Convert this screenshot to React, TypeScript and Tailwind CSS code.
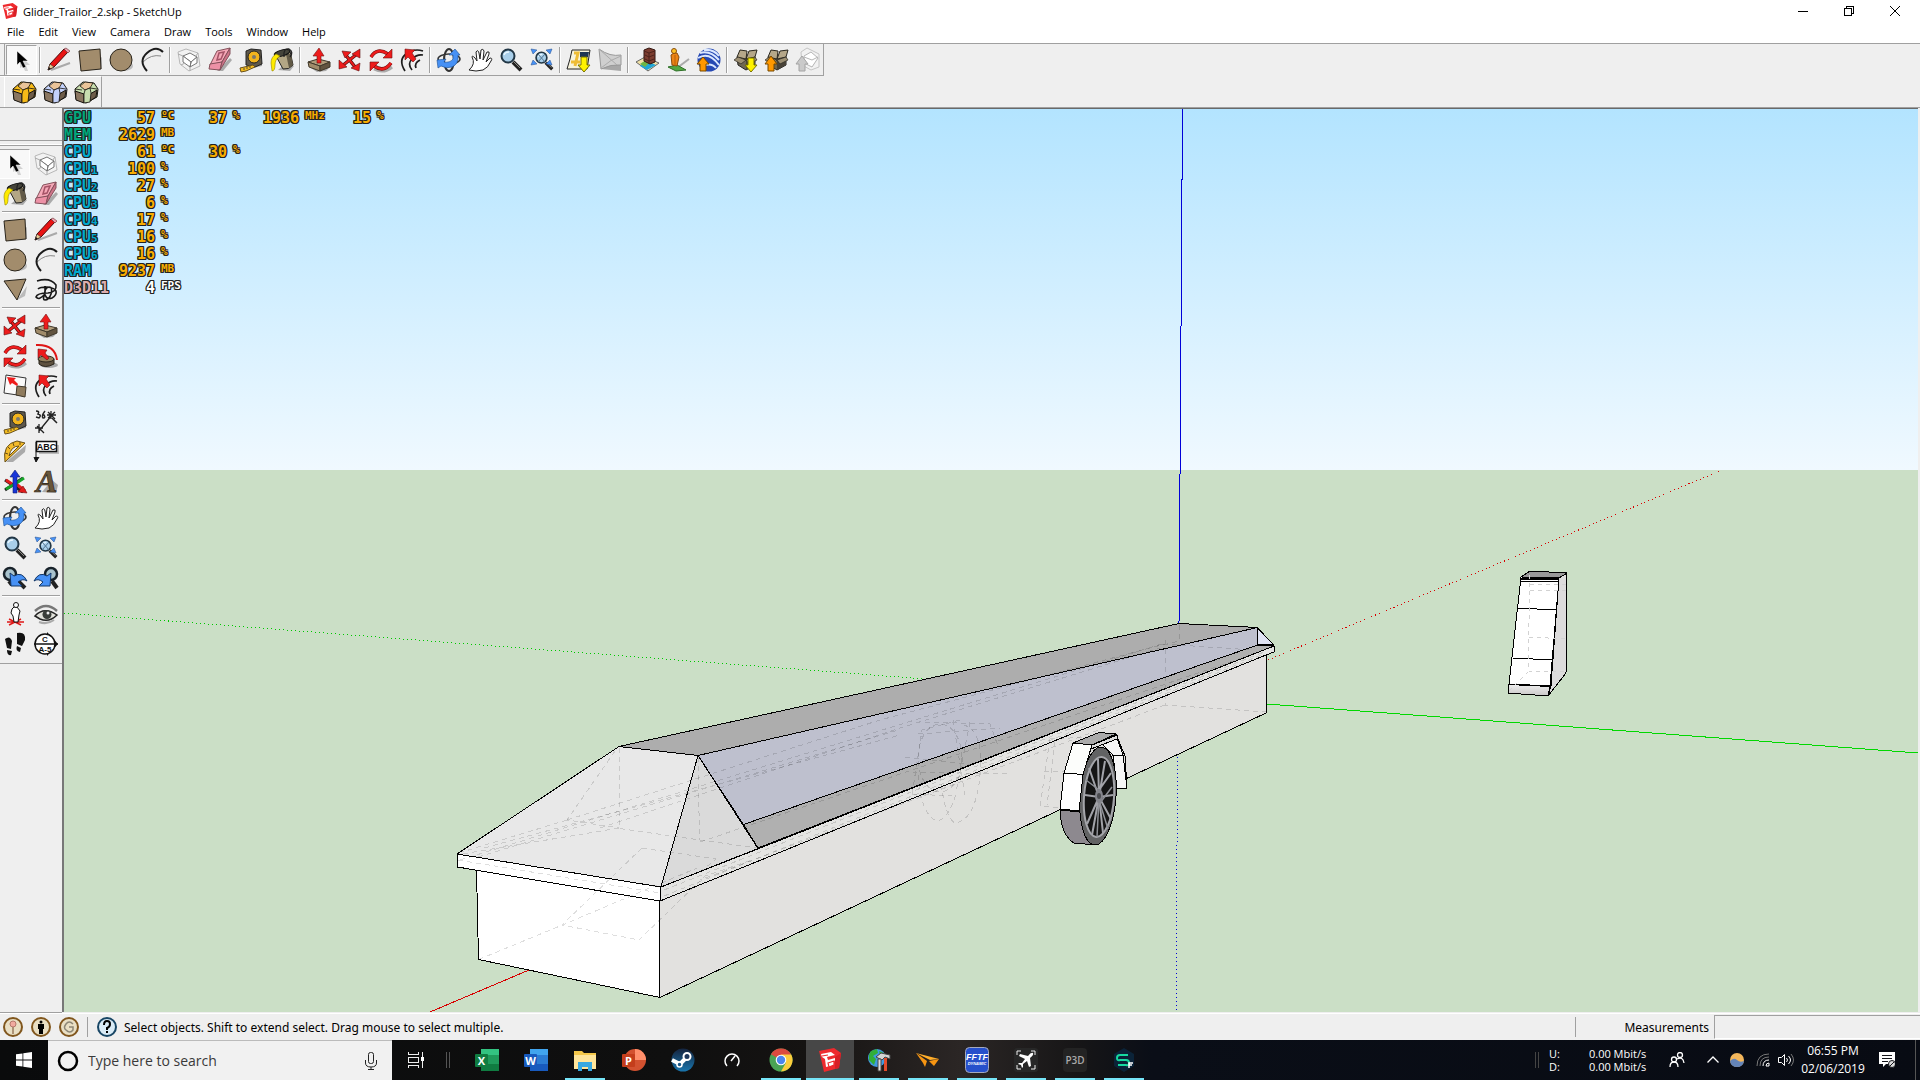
import type { ReactNode } from "react";

type IconName = keyof typeof icons;

const lens = (
    <>
        <path d="M14 14l8 8" stroke="#222" strokeWidth="4" />
        <path d="M15 14l6 6" stroke="#8b8b85" strokeWidth="1" />
        <circle cx="9" cy="8" r="6.5" fill="#a9cfea" stroke="#223746" strokeWidth="2" />
        <path d="M5 7q1-3 5-3" stroke="#e8f6ff" strokeWidth="1.5" fill="none" />
    </>
);

const moveArrows = (
    <>
        <path d="M7 6l10 13M19 6L4 18" stroke="#5b1010" strokeWidth="3.5" />
        <path d="M7 6l10 13M19 6L4 18" stroke="#ee1c1c" strokeWidth="2" />
        <path
            d="M4 3l9 1-6 6zM22 1v9l-8-4zM1 12v9l8-2zM22 15l-1 8-8-3z"
            fill="#ee1c1c"
            stroke="#5b1010"
            strokeWidth=".6"
        />
    </>
);

const boxShape = (
    <>
        <path d="M3 9l9 3 9-3v8l-9 5-8-5z" fill="#6f6753" stroke="#222" />
        <path d="M12 12l9-3v8l-9 5z" fill="#494338" />
        <path d="M3 9l3-7 7 1-1 8zM12 11l3-8 8-1-2 7z" fill="#b5a789" stroke="#2b281f" />
        <path d="M4 9l-4 3 7 4 5-4zM21 9l2 3-8 4-3-4z" fill="#9c8f73" stroke="#2b281f" strokeWidth=".7" />
    </>
);

function solid(color: string, top: string) {
    return (
        <>
            <path d="M1 9l8-7 11 1 4 6-1 8-11 6-10-4z" fill={color} stroke="#15130e" />
            <path d="M6 6l5-4 8 1-3 5-5 2z" fill={top} stroke="#15130e" strokeWidth=".8" />
            <path d="M1 11l9 3v9l-8-3z" fill="#8a7660" stroke="#15130e" />
            <path d="M16 14l7-4-1 7-6 4z" fill="#6d5c49" stroke="#15130e" />
            <path d="M10 14l1-4 5-2 1 5-1 9-6 1z" fill={color} stroke="#15130e" strokeWidth=".8" />
            <path d="M1 9l7 1M16 8l7 1" stroke="#15130e" strokeWidth=".8" />
        </>
    );
}

const icons = {
    select: (
        <>
            <path d="M10 7v13l3-2 2 5h3l-2-6h4z" fill="#999" opacity=".4" />
            <path d="M7 3v14l3-3 3 6 3-1-3-6h5z" fill="#000" stroke="#fff" strokeWidth=".5" />
        </>
    ),
    pencil: (
        <>
            <path d="M4 22l19-7" stroke="#aaa" strokeWidth="2" />
            <path d="M1 22l2-6L17 1l4 3L7 19z" fill="#e81313" stroke="#4d0909" />
            <path d="M1 22l2-6 4 3z" fill="#e9cc94" stroke="#333" strokeWidth=".6" />
            <path d="M1 22l1-3 2 2z" fill="#111" />
            <path d="M17 1l2-1 4 3-2 2z" fill="#ef9dac" stroke="#633" strokeWidth=".6" />
        </>
    ),
    rect: (
        <>
            <path d="M4 23l20-2V9z" fill="#bbb" />
            <path d="M1 3l21-2 1 20-20 2z" fill="#a28c6c" stroke="#29241b" />
        </>
    ),
    circle: (
        <>
            <ellipse cx="15" cy="18" rx="9" ry="5" fill="#bbb" />
            <circle cx="12" cy="12" r="11" fill="#a28c6c" stroke="#29241b" />
        </>
    ),
    polygon: (
        <>
            <path d="M14 22L24 8l-2 10z" fill="#bbb" />
            <path d="M1 3l22-2-9 21z" fill="#a28c6c" stroke="#29241b" />
        </>
    ),
    arc: (
        <>
            <path d="M3 14q8-8 18-6" fill="none" stroke="#888" />
            <path d="M7 23Q-2 13 7 5t16-1" fill="none" stroke="#1b1b1b" strokeWidth="2" />
        </>
    ),
    freehand: (
        <path
            d="M3 3q13-4 19 4 1 7-8 8-11 0-12 4 3 4 9-3V8M11 16q-3 6 0 6 4 0 6-6 2-7-2-7-5 1-4 8 2 5 7 3 5-3 4-7-1-3-9-4-7 0-9 2"
            fill="none"
            stroke="#181818"
            strokeWidth="1.6"
        />
    ),
    component: (
        <>
            <path d="M1 4l8-3 12 4 2 13-11 5-9-7z" fill="#f2f2f2" stroke="#b8b8b8" />
            <path d="M6 8l7-3 7 4-6 5z" fill="#fff" stroke="#777" />
            <path d="M6 8v6l7 5 1-5zM14 14l6-5v6l-7 4z" fill="#fff" stroke="#777" />
            <path d="M1 6l5 2M21 5l-3 4M4 17l4-2M13 23v-4" stroke="#aaa" />
        </>
    ),
    eraser: (
        <>
            <path d="M9 23L22 10l2 2-9 11z" fill="#aaa" />
            <path d="M9 3l13-3-8 14-12 3z" fill="#f5a8b7" stroke="#83505a" />
            <path d="M2 16l12-2-2 8-11-1z" fill="#ed91a6" stroke="#83505a" />
            <path d="M22 0v6l-10 16 2-8z" fill="#ce7388" stroke="#83505a" />
            <path d="M11 5l5-1-3 7-4 1z" fill="none" stroke="#a55367" strokeWidth="1.500" />
        </>
    ),
    tape: (
        <>
            <path d="M14 20l9-2v-4z" fill="#aaa" />
            <path d="M7 3l5-2 10 1 1 14-7 3-9-2z" fill="#5f584b" stroke="#222" />
            <circle cx="15" cy="9" r="6" fill="#f2b41d" stroke="#222" />
            <circle cx="15" cy="9" r="2" fill="#7d786c" />
            <path d="M14 17L1 20l1 4 5-1 9-4z" fill="#f5bd20" stroke="#69501a" />
            <path d="M5 20v2M8 19v2M11 18v2" stroke="#333" strokeWidth=".8" />
        </>
    ),
    bucket: (
        <>
            <path d="M8 22l12 1 4-5-7-4z" fill="#aaa" />
            <path d="M6 8l14-5 3 14q-4 5-10 4z" fill="#b3a685" stroke="#222" />
            <path d="M16 6l3 14 4-3-2-11z" fill="#625a47" />
            <ellipse cx="12" cy="5" rx="8" ry="3" transform="rotate(-16 12 5)" fill="#45443b" stroke="#111" />
            <path d="M6 6Q1 9 1 15l1 8q3 0 3-6 0-6 5-9z" fill="#ffeb00" stroke="#938400" strokeWidth=".6" />
            <path d="M14 9q-1-9 5-8 5 3 1 8" fill="none" stroke="#222" strokeWidth="1.3" />
        </>
    ),
    pushPull: (
        <>
            <path d="M4 20l19-1-4 4-9 1z" fill="#aaa" />
            <path d="M1 14l10-3 12 3-10 4z" fill="#b09b79" stroke="#40382a" />
            <path d="M1 14l12 4v5L2 19z" fill="#a08b6a" stroke="#40382a" />
            <path d="M13 18l10-4v5l-10 4z" fill="#625440" stroke="#40382a" />
            <path d="M10 15V8H6l6-8 5 8h-3v7z" fill="#ee1c1c" stroke="#701010" strokeWidth=".6" />
        </>
    ),
    move: moveArrows,
    rotate: (
        <>
            <path d="M5 21q10 5 18-2" stroke="#aaa" strokeWidth="3" fill="none" />
            <path d="M2 9Q8-1 19 6M22 15Q15 25 5 18" stroke="#6d1010" strokeWidth="3.500" fill="none" />
            <path d="M2 9Q8-1 19 6M22 15Q15 25 5 18" stroke="#ee1c1c" strokeWidth="2.500" fill="none" />
            <path d="M23 1v9h-9zM1 23v-9h9z" fill="#ee1c1c" stroke="#6d1010" strokeWidth=".6" />
        </>
    ),
    offset: (
        <>
            <path d="M5 23Q-2 12 6 6t17-3M12 22q-5-6 0-11t11-4M16 20q-2-5 4-8" fill="none" stroke="#1d1d1d" strokeWidth="1.700" />
            <path d="M13 14L8 9l-3 3V1l10 1-3 3 4 6z" fill="#ee1c1c" stroke="#6d1010" strokeWidth=".6" />
        </>
    ),
    followMe: (
        <>
            <ellipse cx="15" cy="21" rx="9" ry="3" fill="#aaa" />
            <path d="M5 15v5q6 5 15 0v-5z" fill="#5e513f" stroke="#29241b" />
            <ellipse cx="12" cy="15" rx="8" ry="3" fill="#95825f" stroke="#29241b" />
            <path d="M2 1q19-1 21 15" fill="none" stroke="#df1515" strokeWidth="2" />
            <path d="M13 16L7 11l-3 3V5l9 1-2 3 4 5z" fill="#ee1c1c" stroke="#6d1010" strokeWidth=".6" />
        </>
    ),
    scale: (
        <>
            <path d="M3 1l20 3-2 18-20-3z" fill="#fafafa" stroke="#333" />
            <path d="M14 12l9 1-1 10-9-2z" fill="#8f7b5d" stroke="#40382a" />
            <path d="M14 12l-5-3-2 2-3-8 9 1-2 2 4 4z" fill="#ee1c1c" />
        </>
    ),
    orbit: (
        <>
            <ellipse cx="12" cy="12" rx="5" ry="11" fill="none" stroke="#333" strokeWidth="2" />
            <ellipse cx="12" cy="11" rx="11" ry="5" fill="none" stroke="#333" strokeWidth="1.500" />
            <path d="M0 12l9-1-2 3q6 1 9-3V7h-4l6-6 5 6h-2q1 9-6 12-6 2-11-1l-3 2z" fill="#4791f5" stroke="#174d91" strokeWidth=".6" />
        </>
    ),
    hand: (
        <path
            d="M1 22q7-6 3-13 0-2 3 1l2 3-1-9q2-3 3 1l1 6 1-9q2-2 3 1l-1 9 4-8q3-1 2 2l-3 8 4-4q3 0 1 3-3 7-8 9-7 2-14 0z"
            fill="#fff"
            stroke="#222"
        />
    ),
    zoom: lens,
    zoomExtents: (
        <>
            <g transform="translate(4 3) scale(.83)">{lens}</g>
            <path d="M1 1l6 1-4 4zM22 1l-6 1 4 4zM1 17l6-1-4-4zM22 17l-2-5-4 4z" fill="#4791f5" stroke="#224d8b" strokeWidth=".5" />
            <path d="M8 6l7 8M15 6l-7 8" stroke="#527591" />
        </>
    ),
    previous: (
        <>
            <path d="M15 15l7 7M6 15l3 4" stroke="#222" strokeWidth="4" />
            <circle cx="7" cy="8" r="6" fill="#a9c3cd" stroke="#18222a" strokeWidth="2.500" />
            <path d="M8 20l-1-13 4 3q8-5 13 5-4-3-9 1l4 4z" fill="#4791f5" stroke="#123667" />
        </>
    ),
    next: (
        <>
            <path d="M18 15l5 7" stroke="#222" strokeWidth="4" />
            <circle cx="17" cy="8" r="6" fill="#a9c3cd" stroke="#18222a" strokeWidth="2.500" />
            <path d="M16 20l1-13-4 3q-8-5-13 5 4-3 9 1l-4 4z" fill="#4791f5" stroke="#123667" />
        </>
    ),
    location: (
        <>
            <path d="M5 2h18l-3 19H0l3-10z" fill="#f8f4dc" stroke="#222" />
            <path d="M13 4h9l-1 5h-8z" fill="#1f3652" />
            <path d="M7 5h4l-3 13M4 14h9" fill="none" stroke="#efbd36" strokeWidth="3" />
            <path d="M14 9h6v8h3l-6 7-6-7h3z" fill="#fff200" stroke="#777000" />
        </>
    ),
    terrain: (
        <>
            <path d="M3 21l20 2V10z" fill="#a7a7a7" />
            <path d="M1 1q11 8 22 6v10q-10-1-20 4z" fill="#cfcfcf" stroke="#999" />
            <path d="M1 1l18 16M3 20q10-9 20-12" stroke="#ababab" fill="none" />
        </>
    ),
    building: (
        <>
            <path d="M1 14l9-5 14 6-11 8z" fill="#f0e0a6" stroke="#666" />
            <path d="M5 18l7-5 9 4-9 5z" fill="#20a6d6" />
            <path d="M5 16l6-4 5 1-6 6z" fill="#6cb544" />
            <path d="M9 2l5-2 6 2v12l-5 2-6-3z" fill="#7c3d30" stroke="#321611" />
            <path d="M9 3l5 2 6-2M10 7l4 2 5-2M10 11l4 2 5-2M14 5v10" fill="none" stroke="#4d231b" />
        </>
    ),
    person: (
        <>
            <path d="M11 20L23 11" stroke="#aaa" strokeWidth="2" />
            <path d="M2 19l9-2 9 5-10 1z" fill="#53a742" stroke="#2d7027" />
            <path d="M5 7l3-2h3l2 4-2 9-5-1z" fill="#ed8416" stroke="#874c0d" />
            <circle cx="8" cy="3" r="2.500" fill="#ffc326" stroke="#874c0d" />
            <path d="M9 7v11" stroke="#b76107" />
        </>
    ),
    earth: (
        <>
            <circle cx="12" cy="12" r="11.500" fill="#2649b3" />
            <path d="M3 5q10-3 19 7M1 10q11-7 21 7M7 2q10-1 15 6M8 17q7-2 11 3" fill="none" stroke="#dbe8ff" strokeWidth="2" />
            <path d="M3 23v-7H0l6-7 6 7H9v7z" fill="#ff9800" stroke="#754800" />
        </>
    ),
    boxDown: (
        <>
            {boxShape}
            <path d="M14 10h6v7h3l-6 7-6-7h3z" fill="#fff200" stroke="#777000" />
        </>
    ),
    boxUp: (
        <>
            {boxShape}
            <path d="M3 23v-7H0l6-8 6 8H9v7z" fill="#ff9800" stroke="#754800" />
        </>
    ),
    componentUp: (
        <>
            <path d="M5 4l6-4 12 6v13l-8 3-9-5z" fill="#f2f2f2" stroke="#c5c5c5" />
            <path d="M8 8l7-4 7 6-6 9-8-4z" fill="#fff" stroke="#b5b5b5" />
            <path d="M8 9l8 3 6-3" stroke="#b5b5b5" fill="none" />
            <path d="M3 23v-7H0l6-8 6 8H9v7z" fill="#cacaca" stroke="#a4a4a4" />
        </>
    ),
    solidYellow: solid("#f6ba18", "#eac499"),
    solidBlue: solid("#c3d1fa", "#eac499"),
    solidGreen: solid("#c8deaf", "#eac499"),
    dimension: (
        <>
            <path d="M3 16l7 7M5 21L18 5M1 18h8M5 14v9M13 5h9M17 1v8M14 2l7 7M14 8l7-6" stroke="#222" strokeWidth="1.300" />
            <path d="M2 1q4 0 2 3 4 1 1 4l-3-1M11 1q-4 5-2 7 3 0 1-3L8 5M18 8l5 5" fill="none" stroke="#222" strokeWidth="1.500" />
        </>
    ),
    protractor: (
        <>
            <path d="M3 22L23 5l-1 7-12 10z" fill="#aaa" />
            <path d="M2 22Q-1 4 14 1l8 2zM6 16L16 6q-8 0-10 10z" fill="#f4bb2a" fillRule="evenodd" stroke="#685018" />
            <path d="M2 13l3 1M5 7l2 2M10 3l1 3M17 2v3" stroke="#685018" />
        </>
    ),
    text: (
        <>
            <path d="M2 2v18M0 17l2 5 3-5" stroke="#111" fill="#111" />
            <path d="M5 13h19V5" stroke="#bbb" strokeWidth="2" />
            <rect x="2.500" y="1.500" width="20" height="10" fill="#fff" stroke="#111" strokeWidth="1.500" />
            <text x="12.500" y="10" textAnchor="middle" fontSize="9" fontWeight="700" fontFamily="Liberation Sans" fill="#111">
                ABC
            </text>
        </>
    ),
    axes: (
        <>
            <path d="M2 10l18 12M20 8L2 20" stroke="#222" strokeWidth="3" />
            <path d="M12 13l10 8M3 10l6 4" stroke="#e21b1b" strokeWidth="3" />
            <path d="M12 14l9-6M12 14l-9 5" stroke="#16a328" strokeWidth="3" />
            <path d="M10 23V7H7l5-7 5 7h-3v16z" fill="#1836d8" stroke="#102070" strokeWidth=".6" />
            <path d="M24 23l-9-1 5-6z" fill="#e21b1b" stroke="#701010" strokeWidth=".6" />
        </>
    ),
    text3d: (
        <>
            <path d="M8 22l14 1 2-8-6-5z" fill="#aaa" />
            <text x="2" y="22" fontSize="32" fontWeight="700" fontStyle="italic" fontFamily="Liberation Serif" fill="#6a5639" stroke="#29231a" strokeWidth=".7">
                A
            </text>
        </>
    ),
    position: (
        <>
            <path d="M6 17l12 6M18 17L6 23M4 20h17" stroke="#e01919" strokeWidth="1.500" />
            <path d="M9 7l2-2h3l3 4-1 4-1 7h-4l-1-6-2-3z" fill="#fff" stroke="#111" />
            <circle cx="13" cy="3" r="2.500" fill="#fff" stroke="#111" />
        </>
    ),
    look: (
        <>
            <path d="M1 9Q12-1 23 9" stroke="#777" strokeWidth="2.500" fill="none" />
            <path d="M1 14Q10 4 23 13q-8 8-17 4z" fill="#e1e1da" stroke="#222" strokeWidth="1.500" />
            <circle cx="13" cy="12.500" r="4.500" fill="#393d39" />
            <circle cx="14" cy="11" r="1.500" fill="#eee" />
            <path d="M5 20q8 3 15-2" stroke="#aaa" strokeWidth="2" fill="none" />
        </>
    ),
    walk: (
        <path d="M2 7q5-4 7 2l-1 8-4-1zM4 18l5 1-1 4q-4 1-4-5zM14 1q9-2 8 7l-3 6-5-2zM14 14l4 2-1 4q-5-1-3-6z" fill="#111" />
    ),
    section: (
        <>
            <path d="M13 0l11 12-11 12z" fill="#111" />
            <circle cx="11" cy="12" r="10" fill="#fff" stroke="#111" strokeWidth="1.500" />
            <path d="M0 12h24" stroke="#111" strokeWidth="1.500" />
            <text x="11" y="10" textAnchor="middle" fontSize="8" fontWeight="700" fontFamily="Liberation Sans" fill="#111">
                C
            </text>
            <text x="11" y="20" textAnchor="middle" fontSize="8" fontWeight="700" fontFamily="Liberation Sans" fill="#111">
                A-5
            </text>
        </>
    ),
};

function Tool({ name }: { name: IconName }) {
    return (
        <button
            aria-label={name}
            className={
                name === "select"
                    ? "flex h-[30px] w-[31px] shrink-0 items-center justify-center border border-t-[#a0a0a0] border-l-[#a0a0a0] border-r-white border-b-white bg-[#f8f8f8]"
                    : "flex h-[30px] w-[31px] shrink-0 items-center justify-center"
            }
        >
            <svg className="h-6 w-6 overflow-visible" viewBox="0 0 24 24" fill="none">
                {icons[name]}
            </svg>
        </button>
    );
}

const menus = ["File", "Edit", "View", "Camera", "Draw", "Tools", "Window", "Help"];

const topGroups: IconName[][] = [
    ["select"],
    ["pencil", "rect", "circle", "arc"],
    ["component", "eraser", "tape", "bucket"],
    ["pushPull", "move", "rotate", "offset"],
    ["orbit", "hand", "zoom", "zoomExtents"],
    ["location", "terrain"],
    ["building", "person", "earth"],
    ["boxDown", "boxUp", "componentUp"],
];

const sideGroups: IconName[][] = [
    ["select", "component", "bucket", "eraser"],
    ["rect", "pencil", "circle", "arc", "polygon", "freehand"],
    ["move", "pushPull", "rotate", "followMe", "scale", "offset"],
    ["tape", "dimension", "protractor", "text", "axes", "text3d"],
    ["orbit", "hand", "zoom", "zoomExtents", "previous", "next"],
    ["position", "look", "walk", "section"],
];

function Logo({ className }: { className: string }) {
    return (
        <svg className={className} viewBox="0 0 24 24">
            <path d="M1 3L16 0l7 5-2 15-15 4-2-9z" fill="#ee2a2e" />
            <path d="M17 9l6-4-2 15-4 1z" fill="#d81f26" />
            <path d="M3 6l10-2 4 3-8 2 1 3 7-2v3l-6 2 1 3-4 1-1-8-3-2z" fill="#fff" />
            <path d="M4 8l6-1M10 15l6-2v4l-5 2z" stroke="#ee2a2e" strokeWidth="1.200" fill="#fff" />
        </svg>
    );
}

function TitleBar() {
    return (
        <header className="bg-white text-[11px] text-black">
            <div className="flex h-[22px] items-center">
                <Logo className="ml-0.5 h-4 w-4" />
                <h1 className="ml-[5px] pt-0.5">Glider_Trailor_2.skp - SketchUp</h1>
                <div className="mr-0.5 ml-auto flex">
                    <button aria-label="Minimize" className="flex w-[46px] justify-center">
                        <svg className="h-5 w-3" viewBox="0 0 12 20" stroke="#000" shapeRendering="crispEdges">
                            <path d="M1 10.5h10" />
                        </svg>
                    </button>
                    <button aria-label="Restore" className="flex w-[46px] justify-center">
                        <svg className="h-5 w-3" viewBox="0 0 12 20" fill="none" stroke="#000" shapeRendering="crispEdges">
                            <path d="M1.500 7.500h7v7h-7zM3.500 7V5.500h7v7H9" />
                        </svg>
                    </button>
                    <button aria-label="Close" className="flex w-[46px] justify-center">
                        <svg className="h-5 w-3" viewBox="0 0 12 20" stroke="#000">
                            <path d="M1 5l10 10M11 5L1 15" />
                        </svg>
                    </button>
                </div>
            </div>
            <nav className="flex h-[21px] items-center gap-3.5 px-[7px]">
                {menus.map((menu) => (
                    <button key={menu}>{menu}</button>
                ))}
            </nav>
        </header>
    );
}

function Toolbars() {
    return (
        <div className="border-y border-[#a0a0a0] bg-[#efefef]">
            <div className="flex h-8 w-fit items-center border-r border-b border-[#a0a0a0]">
                <div className="mr-px h-full w-[5px] border-r border-[#a0a0a0]" />
                {topGroups.map((group, index) => (
                    <div key={index} className="flex items-center">
                        {index > 0 ? <div className="mx-[2px] h-[26px] w-0.5 border-l border-[#a0a0a0] bg-white" /> : null}
                        {group.map((name) => (
                            <Tool key={name} name={name} />
                        ))}
                    </div>
                ))}
            </div>
            <div className="flex h-[31px] w-fit items-center border-t border-r border-t-white border-r-[#a0a0a0]">
                <div className="mr-[3px] h-full w-[5px] border-r border-white" />
                <Tool name="solidYellow" />
                <Tool name="solidBlue" />
                <Tool name="solidGreen" />
            </div>
        </div>
    );
}

function SideBar() {
    return (
        <aside className="w-[62px] shrink-0 border-b border-[#a0a0a0] bg-[#efefef]">
            <div className="h-[33px] border-b border-[#a0a0a0]" />
            <div className="h-1 border-b border-white" />
            <div className="border-y border-[#a0a0a0] pt-[3px] pb-1">
                {sideGroups.map((group, index) => (
                    <div key={index}>
                        {index > 0 ? <div className="mx-0.5 my-[2px] h-0.5 border-t border-[#a0a0a0] bg-white" /> : null}
                        <div className="-ml-px grid grid-cols-[31px_31px]">
                            {group.map((name) => (
                                <Tool key={name} name={name} />
                            ))}
                        </div>
                    </div>
                ))}
            </div>
        </aside>
    );
}

function Scene() {
    return (
        <svg
            className="absolute inset-0 h-full w-full"
            viewBox="64 109 1854 903"
            preserveAspectRatio="xMidYMid slice"
            shapeRendering="crispEdges"
            strokeLinejoin="round"
        >
            <defs>
                <linearGradient id="sky" x1="0" y1="0" x2="0" y2="1">
                    <stop offset="0" stopColor="#b3e4ff" />
                    <stop offset="1" stopColor="#f0f9ff" />
                </linearGradient>
                <linearGradient id="sill" x1="0" y1="0" x2="0" y2="1">
                    <stop offset="0" stopColor="#eee" />
                    <stop offset="1" stopColor="#c9c7c7" />
                </linearGradient>
            </defs>
            <rect x="64" y="109" width="1854" height="361" fill="url(#sky)" />
            <rect x="64" y="470" width="1854" height="542" fill="#cbdfc6" />

            {/* axes */}
            <g fill="none">
                <path d="M1182.500 109L1179 623" stroke="#0000d8" />
                <path d="M1177.500 757L1176 1012" stroke="#0000d8" strokeDasharray="1 3" />
                <path d="M1268 660L1722 470" stroke="#d80000" strokeDasharray="1 3" />
                <path d="M430 1012l99-42" stroke="#d80000" />
                <path d="M64 613l861 66" stroke="#00c800" strokeDasharray="1 3" />
                <path d="M1267 704l651 49" stroke="#00d800" />
            </g>

            {/* trailer */}
            <g stroke="#000">
                <path d="M476.500 869L478.500 959.500 660 997.500V901z" fill="#fff" />
                <path d="M659 901l607-246v58L660 997.500z" fill="#e2e1df" />
                <path d="M457 854l204 33-1 14-202.500-34z" fill="#fff" />
                <path d="M661 887l613-241v6l-8 3-606 246z" fill="#e4e4e2" />
                <path d="M619 746.500l560-123 78.500 4L698 755.500z" fill="#adadad" />
                <path d="M619 746.500l79 9L661 887l-204-33z" fill="#e8e8e8" />
                <path d="M698 755.500l60 93L661 887z" fill="#dadada" />
                <path d="M698 755.500l559.500-128V645L743.500 824.500z" fill="#bec0ce" />
                <path d="M743.500 824.500L1257.500 645l16.500 1-516 202z" fill="#b0b0b0" />
                <path d="M1257.500 628l16.500 17-16.500-.5z" fill="#e0e3f3" />
            </g>

            {/* edges behind faces */}
            <g fill="none" stroke="#000" strokeOpacity=".13" strokeDasharray="5 4">
                <path d="M619 748l.5 80.500L700 840l58 8M698 757l1.500 83" />
                <path d="M615 751l-48 69 52 8M567 820l-105 32M619 828l-157 26M460 860L1165 643" />
                <path d="M567 820L880 720 1165 644M600 828L900 728 1160 648" />
                <path d="M484 848L900 735M478 857l420-127" />
                <path d="M478.500 959.500L560 926l137-58M642 848l-80 77 77 15 66-64 47-16M642 848l74 11-17 14" />
                <path d="M458 860l202 33M664 890l600-238M664 896l600-242" />
                <path d="M700 842l560-190M1165 640v65l102 7M1163 644l90 6M1165 705L700 880M1179 625v16l-16 4" />
                <path d="M1050 739l60-3M1050 739l-10 67 24 2M1055 741l-8 64M1044 771l60 3" />
                <path d="M960 720l-38 10-10 65M925 722l65 2 8 22M918 734l82-6M905 757l70 8M912 794l40 2M912 772l95 2M953 720l12 75M970 722l-14 70" />
                <path d="M918 775q3 40 19 46 12-2 20-30M940 775q5 46 16 48 20-4 24-48t-16-50" />
                <ellipse cx="940" cy="758" rx="22" ry="34" />
            </g>

            {/* wheel and mudguard */}
            <g stroke="#000">
                <path d="M1060 810q1 25 14 33l22 2-13-35z" fill="#8d898f" />
                <path d="M1099 741l17-6 7 20 4 33h-10l-4-33z" fill="#f6f6f6" />
                <path d="M1112 755h12M1116 734l9 22 2 32" fill="none" />
                <ellipse cx="1098" cy="796" rx="18" ry="49" transform="rotate(4 1098 796)" fill="#626364" />
            </g>
            <g shapeRendering="auto">
                <ellipse cx="1099" cy="797" rx="15" ry="40" transform="rotate(4 1099 797)" fill="#151515" stroke="#a5a6ab" strokeWidth="2" />
                <g stroke="#a2a3a9" strokeWidth="2">
                    <path d="M1099 797l-1-38M1099 797l6-36M1099 790l12-17M1099 797l14-2M1099 797l12 22M1099 797l4 36M1099 797l-7 38M1099 797l-12 27M1099 797l-14-2M1099 797l-10-29" />
                </g>
                <path d="M1100 803l12-16M1099 797l-2 40M1099 790l-13-10M1099 800l9 29" stroke="#8e9096" strokeWidth="1.500" />
                <ellipse cx="1099" cy="796" rx="4" ry="7" fill="#84858c" />
                <ellipse cx="1099" cy="796" rx="2" ry="3" fill="#4b4c50" />
            </g>
            <g stroke="#000">
                <path d="M1073 743l19 2-9 29.500-19-1.500z" fill="#fcfdfb" />
                <path d="M1064 773l19 1.500-4 37-19-2z" fill="#fff" />
                <path d="M1073 743l26-10.500 17 1.500-24 11z" fill="#aaa" />
                <path d="M1092 745l25-10v4l-26 10z" fill="#ddd" />
                <path d="M1060 810l19 1" strokeWidth="2" />
            </g>

            {/* spare mudguard */}
            <g stroke="#000">
                <path d="M1559 578l8-5-1 100-18 23 3-10z" fill="#dddcdc" />
                <path d="M1521 577l38 1-9 108-41-2z" fill="#fff" />
                <path d="M1509 684.500l41 2-2 9.500-40-3z" fill="url(#sill)" />
                <path d="M1521 577l9-6 37 2-8 5z" fill="#999" />
                <path d="M1517 608.500l40 1M1513 658l39 2M1520 581l39 1" />
                <path d="M1521 578.500h38" strokeWidth="2" />
                <path
                    d="M1530 575l-2 97-19 19M1530 584l36 1M1530 590l36 1M1529 637.500l37 1M1528 671l38 1"
                    fill="none"
                    stroke="#d2d2d2"
                    strokeDasharray="4 4"
                />
            </g>
        </svg>
    );
}

const stats: { label: string; sub?: string; color: string; values: [string, string][] }[] = [
    { label: "GPU", color: "text-[#00a77b]", values: [["57", "ºC"], ["37", "%"], ["1936", "MHz"], ["15", "%"]] },
    { label: "MEM", color: "text-[#00a77b]", values: [["2629", "MB"]] },
    { label: "CPU", color: "text-[#00a9cf]", values: [["61", "ºC"], ["30", "%"]] },
    { label: "CPU", sub: "1", color: "text-[#00a9cf]", values: [["100", "%"]] },
    { label: "CPU", sub: "2", color: "text-[#00a9cf]", values: [["27", "%"]] },
    { label: "CPU", sub: "3", color: "text-[#00a9cf]", values: [["6", "%"]] },
    { label: "CPU", sub: "4", color: "text-[#00a9cf]", values: [["17", "%"]] },
    { label: "CPU", sub: "5", color: "text-[#00a9cf]", values: [["16", "%"]] },
    { label: "CPU", sub: "6", color: "text-[#00a9cf]", values: [["16", "%"]] },
    { label: "RAM", color: "text-[#00a9cf]", values: [["9237", "MB"]] },
    { label: "D3D11", color: "text-[#dcaeb0]", values: [["4", "FPS"]] },
];

function Stats() {
    return (
        <table className="absolute top-px left-0 w-[334px] table-fixed font-['DejaVu_Sans_Mono',monospace] text-[15px] leading-[17px] font-bold [text-shadow:1px_0_#222,-1px_0_#222,0_1px_#222,0_-1px_#222,1px_1px_#222,-1px_-1px_#222,1px_-1px_#222,-1px_1px_#222]">
            <colgroup>
                <col className="w-[46px]" />
                {[0, 1, 2, 3].map((pair) => [
                    <col key={`value${pair}`} className="w-[45px]" />,
                    <col key={`unit${pair}`} className="w-[27px]" />,
                ])}
            </colgroup>
            <tbody>
                {stats.map((row, index) => (
                    <tr key={index} className="h-[17px]">
                        <th scope="row" className={`p-0 text-left whitespace-nowrap ${row.color}`}>
                            {row.label}
                            {row.sub ? <span className="text-[11px] leading-none">{row.sub}</span> : null}
                        </th>
                        {row.values.map(([value, unit], column) => [
                            <td
                                key={`value${column}`}
                                className={`p-0 text-right ${row.label === "D3D11" ? "text-white" : "text-[#f7ad00]"}`}
                            >
                                {value}
                            </td>,
                            <td
                                key={`unit${column}`}
                                className={`p-0 pl-1.5 align-top text-[11px] leading-3 ${row.label === "D3D11" ? "text-white" : "text-[#f7ad00]"}`}
                            >
                                {unit}
                            </td>,
                        ])}
                    </tr>
                ))}
            </tbody>
        </table>
    );
}

function Badge({ children }: { children: ReactNode }) {
    return (
        <svg className="h-5 w-5" viewBox="0 0 20 20">
            <circle cx="10" cy="10" r="9" fill="#e9dfc4" stroke="#80561d" strokeWidth="2" />
            {children}
        </svg>
    );
}

function StatusBar() {
    return (
        <div className="flex h-[27px] shrink-0 items-center border-t border-white bg-[#efefef] font-['Noto_Sans','Open_Sans',sans-serif] text-xs text-black">
            <div className="flex items-center gap-2 pl-[3px]">
                <Badge>
                    <path d="M10 10v7" stroke="#997a5c" strokeWidth="1.500" />
                    <circle cx="10" cy="7" r="3" fill="#f1aba0" stroke="#b6796d" />
                </Badge>
                <Badge>
                    <circle cx="10" cy="5" r="1.500" />
                    <path d="M7 7h6v5h-1v5H8v-5H7z" />
                </Badge>
                <Badge>
                    <path d="M14 7q-4-4-7 0t0 6q4 4 7 0v-3h-4" fill="none" stroke="#8d8776" strokeWidth="1.500" />
                </Badge>
            </div>
            <div className="mx-2 h-5 w-px bg-[#a0a0a0]" />
            <svg className="ml-px h-5 w-5" viewBox="0 0 20 20">
                <circle cx="10" cy="10" r="9" fill="#d9ebf6" stroke="#184665" strokeWidth="2" />
                <path d="M7 8q0-4 3-4t3 3-3 4v2M10 14v2" fill="none" stroke="#000" strokeWidth="2" />
            </svg>
            <p className="ml-[7px] pt-0.5">Select objects. Shift to extend select. Drag mouse to select multiple.</p>
            <div className="ml-auto h-5 w-px bg-[#a0a0a0]" />
            <label htmlFor="measurements" className="w-[138px] pt-0.5 pr-[5px] text-right">
                Measurements
            </label>
            <input id="measurements" className="h-6 w-[206px] border border-r-0 border-[#a0a0a0] border-b-white px-1 outline-none" />
        </div>
    );
}

function Office({ letter, dark, mid, light }: { letter: string; dark: string; mid: string; light: string }) {
    return (
        <svg className="h-6 w-6" viewBox="0 0 24 24">
            {letter === "P" ? (
                <>
                    <circle cx="13" cy="12" r="11" fill={mid} />
                    <path d="M13 1a11 11 0 0 1 11 11H13z" fill={light} />
                </>
            ) : (
                <>
                    <rect x="6" y="1" width="18" height="22" rx="1" fill={mid} />
                    <path d="M6 1h18v6H6z" fill={light} />
                    <path d="M6 16h18v7H6z" fill={dark} />
                </>
            )}
            <rect x="0" y="6" width="13" height="13" rx="1" fill={dark} />
            <text x="6.500" y="16.500" textAnchor="middle" fontSize="11" fontWeight="700" fontFamily="Open Sans" fill="#fff">
                {letter}
            </text>
        </svg>
    );
}

const apps: { name: string; open?: boolean; active?: boolean; icon: ReactNode }[] = [
    { name: "Excel", icon: <Office letter="X" dark="#107c41" mid="#1f9b5b" light="#33c481" /> },
    { name: "Word", icon: <Office letter="W" dark="#185abd" mid="#2b7cd3" light="#41a5ee" /> },
    {
        name: "File Explorer",
        open: true,
        icon: (
            <svg className="h-6 w-6" viewBox="0 0 24 24">
                <path d="M1 3h8l2 2h12v16H1z" fill="#f5c84a" />
                <path d="M1 7h22v14H1z" fill="#ffe59a" />
                <path d="M5 23v-9h14v9h-4v-4H9v4z" fill="#38a8e0" />
            </svg>
        ),
    },
    { name: "PowerPoint", icon: <Office letter="P" dark="#c43e1c" mid="#d35230" light="#ff8f6b" /> },
    {
        name: "Steam",
        icon: (
            <svg className="h-6 w-6" viewBox="0 0 24 24">
                <defs>
                    <linearGradient id="steam" x1="0" y1="0" x2="0" y2="1">
                        <stop offset="0" stopColor="#15243e" />
                        <stop offset="1" stopColor="#1975ad" />
                    </linearGradient>
                </defs>
                <circle cx="12" cy="12" r="11.500" fill="url(#steam)" />
                <path d="M1 12l8 4 6-6" stroke="#fff" strokeWidth="4" fill="none" />
                <circle cx="16" cy="8.500" r="3.500" fill="#1c365a" stroke="#fff" strokeWidth="2" />
                <circle cx="8.500" cy="16.500" r="2.500" fill="#1a5786" stroke="#fff" strokeWidth="1.500" />
            </svg>
        ),
    },
    {
        name: "Speed",
        icon: (
            <svg className="h-4 w-4" viewBox="0 0 16 16" fill="none" stroke="#fff" strokeWidth="1.500">
                <path d="M3 14A7 7 0 1 1 13 14M7 9l4-5" />
            </svg>
        ),
    },
    {
        name: "Chrome",
        open: true,
        icon: (
            <svg className="h-6 w-6" viewBox="0 0 24 24">
                <circle cx="12" cy="12" r="11.500" fill="#4aa454" />
                <path d="M12 12L2 6.300A11.500 11.500 0 0 1 22 6.300z" fill="#db4a3f" />
                <path d="M12 6.500h10.200A11.500 11.500 0 0 1 12 23.500l5-9z" fill="#fbcd3c" />
                <circle cx="12" cy="12" r="5.300" fill="#fff" />
                <circle cx="12" cy="12" r="4.200" fill="#4c86ee" />
            </svg>
        ),
    },
    { name: "SketchUp", open: true, active: true, icon: <Logo className="h-6 w-6" /> },
    {
        name: "Network tools",
        open: true,
        icon: (
            <svg className="h-6 w-6" viewBox="0 0 24 24">
                <circle cx="10" cy="10" r="9" fill="#3f99e0" />
                <path d="M4 3l6-2 1 4-5 3 3 3-2 6-5-5V7zM12 3l5 2 1 3-4 2z" fill="#31ae38" />
                <path d="M9 9l5-4 9 2v4l-5-2-3 3z" fill="#d5d5d5" stroke="#444" />
                <path d="M11 11h3v12h-3z" fill="#ddd" stroke="#444" />
                <path d="M17 10h3v13h-3z" fill="#e34b2b" />
            </svg>
        ),
    },
    {
        name: "Paper plane",
        open: true,
        icon: (
            <svg className="h-6 w-6" viewBox="0 0 24 24">
                <path d="M0 5l23 6-9 1z" fill="#ffad29" />
                <path d="M0 5l11 8-2 6-2-4zM13 13l10-2-5 7z" fill="#f79512" />
            </svg>
        ),
    },
    {
        name: "FFTF Dynamic",
        open: true,
        icon: (
            <svg className="h-[26px] w-6" viewBox="0 0 24 26">
                <rect x=".5" y=".5" width="23" height="25" rx="4" fill="#2650cb" stroke="#a5a9bd" />
                <text x="12" y="13" textAnchor="middle" fontSize="9" fontStyle="italic" fontWeight="700" fontFamily="Liberation Sans" fill="#fff">
                    FFTF
                </text>
                <text x="12" y="18" textAnchor="middle" fontSize="4" fontStyle="italic" fontWeight="700" fontFamily="Liberation Sans" fill="#fff">
                    DYNAMIC
                </text>
            </svg>
        ),
    },
    {
        name: "Flight",
        open: true,
        icon: (
            <svg className="h-6 w-6" viewBox="0 0 24 24">
                <rect width="24" height="24" rx="3" fill="#272727" />
                <path d="M3 7V3h4M17 3h4v4M3 17v4h4M17 21h4v-4" fill="none" stroke="#eee" />
                <path d="M19 5q-2-1-5 3L6 6 5 8l6 3-3 4H5l-1 1 3 1 1 3 1-1v-3l4-3 2 6 2-1-1-8q4-3 3-5z" fill="#fff" />
            </svg>
        ),
    },
    {
        name: "P3D",
        open: true,
        icon: (
            <span className="flex h-6 w-6 items-center justify-center rounded-sm bg-[#232323] text-[10px] font-semibold text-[#aaa]">
                P3D
            </span>
        ),
    },
    {
        name: "Smart",
        open: true,
        icon: (
            <svg className="h-6 w-6" viewBox="0 0 24 24">
                <path d="M12 0l10 6v12l-10 6-10-6V6z" fill="#0b2338" />
                <path d="M16 7H8q-3 0-3 3t3 2h6q3 0 3 3t-3 2H6" fill="none" stroke="#16d9a0" strokeWidth="2" />
                <path d="M17 20v-5h4M17 17h3" fill="none" stroke="#fff" strokeWidth="1.500" />
            </svg>
        ),
    },
];

function Taskbar() {
    return (
        <footer className="flex h-10 shrink-0 bg-[linear-gradient(90deg,#0a0b0c,#0f0f0f_35%,#151312_42%,#2b2625_50%,#171617_56%,#0a0e17_60%,#080b13)] text-white">
            <button aria-label="Start" className="flex w-12 shrink-0 items-center justify-center">
                <svg className="h-4 w-4" viewBox="0 0 16 16" fill="#fff">
                    <path d="M0 2.300l6.500-.9v6.200H0zM7.300 1.300L16 0v7.600H7.300zM0 8.400h6.500v6.200L0 13.700zM7.300 8.400H16V16l-8.700-1.200z" />
                </svg>
            </button>
            <div className="flex w-[344px] shrink-0 items-center border-t border-[#bbb] bg-[#f1f1f1]">
                <svg className="ml-[9px] h-[22px] w-[22px]" viewBox="0 0 22 22" fill="none">
                    <circle cx="11" cy="11" r="9" stroke="#000" strokeWidth="2.500" />
                </svg>
                <input
                    aria-label="Type here to search"
                    placeholder="Type here to search"
                    className="ml-[9px] min-w-0 flex-1 bg-transparent text-sm text-black outline-none placeholder:text-[#3a3a3a]"
                />
                <svg className="mr-[15px] h-[18px] w-3" viewBox="0 0 12 18" fill="none" stroke="#222">
                    <rect x="3.500" y=".5" width="5" height="11" rx="2" />
                    <path d="M.5 8v3q0 4 5.500 4t5.500-4V8M6 15v2.500M3 17.500h6" />
                </svg>
            </div>
            <button aria-label="Task view" className="flex w-12 shrink-0 items-center justify-center">
                <svg className="h-4 w-4" viewBox="0 0 16 16" fill="none" stroke="#eee" shapeRendering="crispEdges">
                    <path d="M.5 0v2.500h10V0M.5 5.500h10v5H.5zM.5 16v-2.500h10V16M14.500 0v16" />
                    <path d="M13 5h3v4h-3z" fill="#fff" stroke="none" />
                </svg>
            </button>
            <div className="mr-[13px] ml-1.5 h-4 w-1 self-center border-x border-[#555]" />
            <div className="flex gap-px">
                {apps.map((app) => (
                    <button
                        key={app.name}
                        aria-label={app.name}
                        className={`relative flex w-12 items-center justify-center ${app.active ? "bg-[#474747]" : ""}`}
                    >
                        {app.icon}
                        {app.open ? (
                            <span className={`absolute bottom-0 h-0.5 bg-[#76e5f8] ${app.active ? "inset-x-0" : "inset-x-1"}`} />
                        ) : null}
                    </button>
                ))}
            </div>
            <div className="ml-auto flex items-center">
                <div className="mr-2.5 h-4 w-1 border-x border-[#444]" />
                <dl className="grid w-[98px] grid-cols-[40px_1fr] text-[11px] leading-[13px]">
                    <dt>U:</dt>
                    <dd className="whitespace-nowrap">0.00 Mbit/s</dd>
                    <dt>D:</dt>
                    <dd className="whitespace-nowrap">0.00 Mbit/s</dd>
                </dl>
                <svg className="ml-[22px] h-4 w-4" viewBox="0 0 16 16" fill="none" stroke="#fff" strokeWidth="1.300">
                    <circle cx="11" cy="3" r="2.500" />
                    <circle cx="5" cy="7.500" r="2.500" />
                    <path d="M1 15q0-5 4-5t4 5M8 7q6-3 7 4" />
                </svg>
                <svg className="ml-[22px] h-3 w-3" viewBox="0 0 12 12" fill="none" stroke="#fff" strokeWidth="1.300">
                    <path d="M.5 8.500L6 3l5.500 5.500" />
                </svg>
                <svg className="ml-[11px] h-3.5 w-3.5" viewBox="0 0 14 14">
                    <circle cx="7" cy="7" r="7" fill="#f3b65b" />
                    <path d="M0 8q4-4 7-1t7 1q-1 6-7 6T0 8z" fill="#6484b8" />
                </svg>
                <svg className="ml-3 h-3.5 w-3.5" viewBox="0 0 14 14" fill="none">
                    <path d="M1 13Q1 1 13 1M4 13q0-9 9-9" stroke="#777" />
                    <path d="M7 13q0-6 6-6M10 13q0-3 3-3v3z" stroke="#fff" />
                </svg>
                <svg className="ml-2 h-4 w-4" viewBox="0 0 16 16" fill="none" stroke="#fff">
                    <path d="M.5 5.500h3l3-3v11l-3-3h-3zM8.500 6q2 2 0 4M10.500 4q4 4 0 8" />
                    <path d="M13 2q5 6 0 12" stroke="#777" />
                </svg>
                <time className="w-[78px] text-center text-xs leading-[18px] whitespace-nowrap">
                    06:55 PM
                    <br />
                    02/06/2019
                </time>
                <button aria-label="Notifications" className="mr-5 ml-[7px]">
                    <svg className="h-4 w-4" viewBox="0 0 16 16">
                        <path d="M0 0h16v12H7l-3 3v-3H0z" fill="#fff" />
                        <path d="M3 3.500h10M3 6.500h10M3 9.500h6" stroke="#15161b" />
                        <circle cx="13" cy="12" r="3.500" fill="#ddd" stroke="#15161b" />
                        <path d="M10 15l5-5" stroke="#15161b" />
                    </svg>
                </button>
                <div className="h-10 w-[5px] border-l border-[#555]" />
            </div>
        </footer>
    );
}

export default function App() {
    return (
        <div className="flex h-screen flex-col overflow-hidden bg-[#efefef] font-['Open_Sans','Noto_Sans',sans-serif]">
            <TitleBar />
            <Toolbars />
            <div className="flex min-h-0 flex-1">
                <SideBar />
                <main className="relative mr-0.5 mb-px min-w-0 flex-1 overflow-hidden border-t border-l-2 border-t-[#696969] border-l-[#777]">
                    <Scene />
                    <Stats />
                </main>
            </div>
            <StatusBar />
            <Taskbar />
        </div>
    );
}
